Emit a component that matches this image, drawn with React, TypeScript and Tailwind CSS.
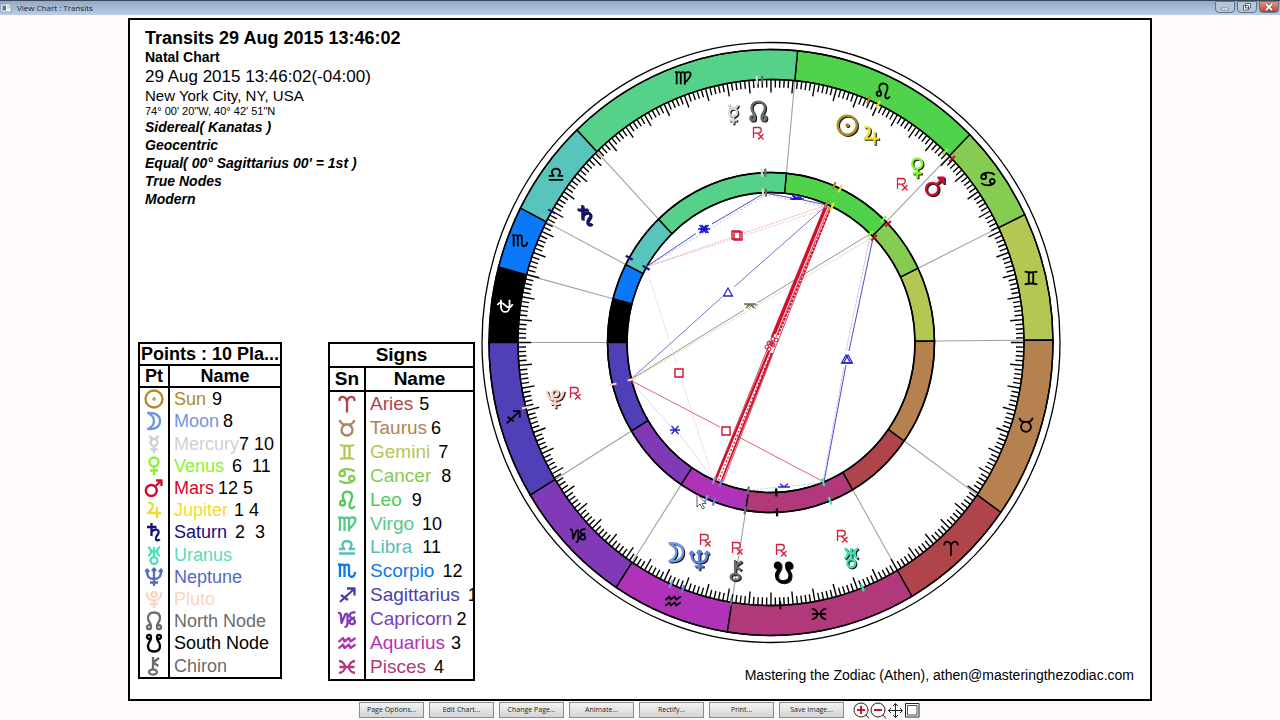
import React from "react";

type GlyphName =
  | "sun" | "moon" | "mercury" | "venus" | "mars" | "jupiter" | "saturn" | "uranus" | "neptune" | "pluto"
  | "north" | "south" | "chiron"
  | "aries" | "taurus" | "gemini" | "cancer" | "leo" | "virgo" | "libra" | "scorpio" | "sagittarius"
  | "capricorn" | "aquarius" | "pisces" | "ophiuchus";

/* Stroke paths, each drawn in a 20 x 20 box. */
const GLYPHS: Record<GlyphName, string> = {
  sun: "M1.5 10a8.5 8.5 0 1 0 17 0a8.5 8.5 0 1 0 -17 0M9.4 10a.6 .6 0 1 0 1.2 0a.6 .6 0 1 0 -1.2 0",
  moon: "M4 2C12 1 16 5 16 10S12 19 4 18C8 16 10 14 10 10S8 4 4 2Z",
  mercury: "M6.5 8.5a3.5 3.5 0 1 0 7 0a3.5 3.5 0 1 0 -7 0M6 1.5C6.500 6 13.500 6 14 1.500M10 12V19M6.500 15.500H13.500",
  venus: "M5.500 6a4.500 4.500 0 1 0 9 0a4.500 4.500 0 1 0 -9 0M10 10.500V19M6 14.500H14",
  mars: "M1.800 12.500a5.500 5.500 0 1 0 11 0a5.500 5.500 0 1 0 -11 0M11 8.500L17.500 2.500M12 2.500H17.500V8",
  jupiter: "M4 3C10 1.500 10.500 8 4 13H17M13 7V18.500",
  saturn: "M7.500 1V14M3 5H12.500M7.500 10C10 6.500 15.500 7 14.500 11C13.500 14 11 14.500 12 17.500C13 19 15 18.500 15.500 17",
  uranus: "M6.500 15.500a3.500 3.500 0 1 0 7 0a3.500 3.500 0 1 0 -7 0M10 2V12M4 2C8 4 8 9 4 11M16 2C12 4 12 9 16 11M6.500 6.500H13.500",
  neptune: "M3 3C3 10 5 12 10 12S17 10 17 3M10 2V19M6 15.500H14M1.500 5L3 2.500L5 5M8 4L10 1.500L12 4M15 5L17 2.500L18.500 5",
  pluto: "M7.300 5.500a2.700 2.700 0 1 0 5.400 0a2.700 2.700 0 1 0 -5.400 0M2.500 3.500C3 9 5.500 11.500 10 11.500S17 9 17.500 3.500M10 11.500V19M6 15H14",
  north: "M7 15C7 12 4 11 4 7C4 3.500 6.500 1.500 10 1.500S16 3.500 16 7C16 11 13 12 13 15M3 16.200a2 2 0 1 0 4 0a2 2 0 1 0 -4 0M13 16.200a2 2 0 1 0 4 0a2 2 0 1 0 -4 0",
  south: "M7 5C7 8 4 9 4 13C4 16.500 6.500 18.500 10 18.500S16 16.500 16 13C16 9 13 8 13 5M3 3.800a2 2 0 1 0 4 0a2 2 0 1 0 -4 0M13 3.800a2 2 0 1 0 4 0a2 2 0 1 0 -4 0",
  chiron: "M5 16a4 2.700 0 1 0 8 0a4 2.700 0 1 0 -8 0M9 1V13M15 2L9 6.500L14.500 10",
  aries: "M2.500 7C2 1.500 9 1 10 8V18.500M17.500 7C18 1.500 11 1 10 8",
  taurus: "M4.500 12a5.500 5.500 0 1 0 11 0a5.500 5.500 0 1 0 -11 0M2.500 2C4.500 7 7 6.500 10 6.500S15.500 7 17.500 2",
  gemini: "M3 3C7 4 13 4 17 3M3 17C7 16 13 16 17 17M7.500 4V16M12.500 4V16",
  cancer: "M2.500 7.500a2.700 2.700 0 1 0 5.400 0a2.700 2.700 0 1 0 -5.400 0M2.500 7C4 2 14 2 17.500 5.500M12.100 12.500a2.700 2.700 0 1 0 5.400 0a2.700 2.700 0 1 0 -5.400 0M17.500 13C16 18 6 18 2.500 14.500",
  leo: "M3 13a2.500 2.500 0 1 0 5 0a2.500 2.500 0 1 0 -5 0M7.500 11.500C6 8 5 6.500 6 4.500C8 0 15.500 1 15 7C14.500 11 11 15 13 17.500C14.500 19 17 18 17.500 16",
  virgo: "M1 3.500H3V17M3 5C4 3 7.500 3 7.500 5.500V17M7.500 5C8.500 3 12 3 12 5.500V17.500M12 4.500C14 3 18.500 3 18.500 5.500C18.500 9 15 12.500 12 15",
  libra: "M2 16.500H18M2 12H7.500C3.500 8 6 4 10 4S16.500 8 12.500 12H18",
  scorpio: "M1 3.500H3V16M3 5C4 3 7.500 3 7.500 5.500V16M7.500 5C8.500 3 12 3 12 5.500V13C12 17 18 17 18 11",
  sagittarius: "M3 17L17 4M10 3.500H17.500V10.500M4 10L11 15",
  capricorn: "M1 4C4 3 4 6 4.500 14L8 6C8.500 4 11 4 10.500 8V14C10.500 16 9.500 18 7.500 18M18.500 3.500C14 3 12 5 13 7.500C14 9.500 18 9.500 18 12.500C18 16 12.500 16 12.500 13C12.500 10 16 9.500 18 8",
  aquarius: "M1.500 9L6 5L7.500 8.500L12 5L13.500 8.500L18.500 5M1.500 15.500L6 11.500L7.500 15L12 11.500L13.500 15L18.500 11.500",
  pisces: "M2 4C10 5 10 15 2 16M18 4C10 5 10 15 18 16M2.500 10H17.500",
  ophiuchus: "M5.500 3V11C5.500 18.500 15 18.500 15 11V3M1.500 9C4 4.500 7 6 10 9S16 13 18.500 8",
};

const Strokes = ({ name, color, width = 2 }: { name: GlyphName; color: string; width?: number }) => (
  <path d={GLYPHS[name]} fill="none" stroke={color} strokeWidth={width} strokeLinejoin="round" />
);

interface Row {
  glyph: GlyphName;
  name: string;
  color: string;
  note?: string;
  gap?: string;
}

const POINTS: Row[] = [
  { glyph: "sun", name: "Sun", color: "#b08a24", note: "9", gap: "pl-1.5" },
  { glyph: "moon", name: "Moon", color: "#6f96df", note: "8", gap: "pl-1" },
  { glyph: "mercury", name: "Mercury", color: "#d0d0d4", note: "7 10" },
  { glyph: "venus", name: "Venus", color: "#84f52e", note: "6  11", gap: "pl-2" },
  { glyph: "mars", name: "Mars", color: "#cf0a2c", note: "12 5", gap: "pl-1" },
  { glyph: "jupiter", name: "Jupiter", color: "#f0dc30", note: "1 4", gap: "pl-1.5" },
  { glyph: "saturn", name: "Saturn", color: "#14107a", note: "2  3", gap: "pl-2" },
  { glyph: "uranus", name: "Uranus", color: "#56dcc0" },
  { glyph: "neptune", name: "Neptune", color: "#5468c4" },
  { glyph: "pluto", name: "Pluto", color: "#fbd3bf" },
  { glyph: "north", name: "North Node", color: "#6c6c6c" },
  { glyph: "south", name: "South Node", color: "#000000" },
  { glyph: "chiron", name: "Chiron", color: "#6c6c6c" },
];

const SIGNS: Row[] = [
  { glyph: "aries", name: "Aries", color: "#b0444b", note: "5", gap: "pl-1.5" },
  { glyph: "taurus", name: "Taurus", color: "#b08458", note: "6", gap: "pl-1" },
  { glyph: "gemini", name: "Gemini", color: "#b5c652", note: "7", gap: "pl-2" },
  { glyph: "cancer", name: "Cancer", color: "#86cc52", note: "8", gap: "pl-2.5" },
  { glyph: "leo", name: "Leo", color: "#50cb58", note: "9", gap: "pl-2.5" },
  { glyph: "virgo", name: "Virgo", color: "#55c98a", note: "10", gap: "pl-2" },
  { glyph: "libra", name: "Libra", color: "#58c0b8", note: "11", gap: "pl-2.5" },
  { glyph: "scorpio", name: "Scorpio", color: "#0a78f0", note: "12", gap: "pl-2" },
  { glyph: "sagittarius", name: "Sagittarius", color: "#4a40ac", note: "1", gap: "pl-2" },
  { glyph: "capricorn", name: "Capricorn", color: "#7a3cb8", note: "2", gap: "pl-1" },
  { glyph: "aquarius", name: "Aquarius", color: "#b034b4", note: "3", gap: "pl-1.5" },
  { glyph: "pisces", name: "Pisces", color: "#b0387b", note: "4", gap: "pl-2" },
];

interface LegendProps {
  title: string;
  short: string;
  rows: Row[];
  tableClass: string;
  headClass: string;
  iconCol: string;
}

const Legend = ({ title, short, rows, tableClass, headClass, iconCol }: LegendProps) => (
  <table className={`table-fixed border-collapse border-2 border-black ${tableClass}`}>
    <colgroup>
      <col className={iconCol} />
      <col />
    </colgroup>
    <thead>
      <tr>
        <th colSpan={2} className={`overflow-hidden whitespace-nowrap border-2 border-black p-0 ${headClass}`}>{title}</th>
      </tr>
      <tr>
        <th className={`border-2 border-black p-0 ${headClass}`}>{short}</th>
        <th className={`border-2 border-black p-0 ${headClass}`}>Name</th>
      </tr>
    </thead>
    <tbody>
      {rows.map((r) => (
        <tr key={r.name}>
          <td className="border-r-2 border-black p-0">
            <svg viewBox="0 0 20 20" className="mx-auto block h-5 w-5" aria-hidden="true">
              <Strokes name={r.glyph} color={r.color} width={2.3} />
            </svg>
          </td>
          <td className="overflow-hidden whitespace-pre p-0 pl-1 leading-5">
            <span style={{ color: r.color }}>{r.name}</span>
            {r.note && <span className={`text-lg/5 ${r.gap ?? ""}`}>{r.note}</span>}
          </td>
        </tr>
      ))}
    </tbody>
  </table>
);

/* Wheel geometry: the wheel is slightly taller than it is wide. */
const CX = 771;
const CY = 341.5;
type Ring = [number, number];
const RIM: Ring = [289, 300];
const BAND_OUT: Ring = [282, 293];
const BAND_IN: Ring = [253, 263];
const HUB_OUT: Ring = [163.5, 170];
const HUB_IN: Ring = [144, 150];

const at = ([rx, ry]: Ring, deg: number, inset = 0): [number, number] => {
  const a = (deg * Math.PI) / 180;
  return [CX + (rx - inset) * Math.cos(a), CY - (ry - inset) * Math.sin(a)];
};

const sector = (o: Ring, i: Ring, from: number, to: number) => {
  const [ax, ay] = at(o, from);
  const [bx, by] = at(o, to);
  const [cx, cy] = at(i, to);
  const [dx, dy] = at(i, from);
  return `M${ax} ${ay}A${o[0]} ${o[1]} 0 0 0 ${bx} ${by}L${cx} ${cy}A${i[0]} ${i[1]} 0 0 1 ${dx} ${dy}Z`;
};

const SECTORS: { glyph: GlyphName; from: number; to: number; fill: string; x: number; y: number; ink?: string }[] = [
  { glyph: "gemini", from: 0.5, to: 25.9, fill: "#b5c652", x: 1031, y: 277 },
  { glyph: "cancer", from: 25.9, to: 45.2, fill: "#86cc52", x: 988, y: 178 },
  { glyph: "leo", from: 45.2, to: 84.6, fill: "#50d34b", x: 883, y: 90 },
  { glyph: "virgo", from: 84.6, to: 133.5, fill: "#55d18a", x: 683, y: 77 },
  { glyph: "libra", from: 133.5, to: 152.7, fill: "#58c4bc", x: 556, y: 173 },
  { glyph: "scorpio", from: 152.7, to: 165.1, fill: "#0a78f8", x: 520, y: 240 },
  { glyph: "ophiuchus", from: 165.1, to: 180, fill: "#000000", x: 505, y: 305, ink: "#ffffff" },
  { glyph: "sagittarius", from: 180, to: 211.4, fill: "#5040b8", x: 513, y: 416 },
  { glyph: "capricorn", from: 211.4, to: 236.7, fill: "#803ab8", x: 578, y: 534 },
  { glyph: "aquarius", from: 236.7, to: 261.1, fill: "#b032b8", x: 673, y: 600 },
  { glyph: "pisces", from: 261.1, to: 300, fill: "#b0387b", x: 819, y: 613 },
  { glyph: "aries", from: 300, to: 324.6, fill: "#b0444b", x: 951, y: 547 },
  { glyph: "taurus", from: 324.6, to: 360.5, fill: "#b5814f", x: 1026, y: 424 },
];

const PLANETS: { glyph: GlyphName; deg: number; color: string; x: number; y: number; weight?: number }[] = [
  { glyph: "mercury", deg: 93.2, color: "#d8d8d8", x: 733, y: 113 },
  { glyph: "north", deg: 92, color: "#6c6c6c", x: 758, y: 110 },
  { glyph: "sun", deg: 67.3, color: "#b08a24", x: 847, y: 124 },
  { glyph: "jupiter", deg: 64.9, color: "#f4e020", x: 871, y: 134 },
  { glyph: "venus", deg: 46.5, color: "#84f52e", x: 917, y: 167 },
  { glyph: "mars", deg: 44.3, color: "#cf0a2c", x: 935, y: 185 },
  { glyph: "saturn", deg: 150.1, color: "#14107a", x: 585, y: 214 },
  { glyph: "pluto", deg: 194.3, color: "#fbd3bf", x: 555, y: 397 },
  { glyph: "moon", deg: 246.7, color: "#6f9ce8", x: 676, y: 551 },
  { glyph: "neptune", deg: 249.6, color: "#5f84dc", x: 699, y: 559 },
  { glyph: "chiron", deg: 260.9, color: "#6c6c6c", x: 736, y: 569 },
  { glyph: "south", deg: 272.1, color: "#000000", x: 783, y: 571, weight: 2.8 },
  { glyph: "uranus", deg: 291.2, color: "#42e0b4", x: 851, y: 556 },
];

const RETROGRADE: [number, number][] = [
  [758, 132], [902, 183], [575, 392], [705, 539], [737, 547], [781, 549], [842, 535],
];

const BLUE = "#3a34cc";
const RED = "#d0102c";

const ASPECTS: { d: string; color: string; w: number; dash?: string }[] = [
  { d: "M646 266L696 232.500M712 223L763 193", color: BLUE, w: 0.9 },
  { d: "M648 265L764 195", color: "#8a86e6", w: 0.6, dash: "2 2" },
  { d: "M765 192L792 197M803 199L827 204", color: BLUE, w: 0.9 },
  { d: "M765 193L790 199M805 202L829 206", color: "#8a86e6", w: 0.6, dash: "2 2" },
  { d: "M646 266L730 237M744 232L827 204", color: "#e88a96", w: 0.7, dash: "2 1" },
  { d: "M646 266L730 239M745 234L831 206", color: "#e8a0a8", w: 0.6, dash: "2 1" },
  { d: "M630 379L722 296M734 286L827 204", color: BLUE, w: 0.7 },
  { d: "M630 379L744 309M757 302L870 233", color: "#6a6a50", w: 0.7 },
  { d: "M630 380L746 311M757 305L873 236", color: "#dca8a0", w: 0.6, dash: "2 1" },
  { d: "M873 237L849 350M846 364L824 481", color: BLUE, w: 0.9 },
  { d: "M870 236L846 350M844 366L823 481", color: "#9a96e6", w: 0.6, dash: "3 1" },
  { d: "M630 379L720 426M733 433L824 481", color: "#d04050", w: 0.8 },
  { d: "M646 266L677 364M682 381L714 480", color: "#f0a8b0", w: 0.7, dash: "1 1" },
  { d: "M630 379L670 425M680 434L714 479", color: "#b4b2e4", w: 0.7, dash: "2 1" },
  { d: "M748 490L777 486M792 485L823 482", color: "#a4a4d4", w: 0.6, dash: "2 1" },
  { d: "M826 204L772 336M769 350L715 480", color: RED, w: 2.4 },
  { d: "M827 205L775 333M772 352L721 481", color: RED, w: 1.8 },
  { d: "M831 206L778 334", color: RED, w: 1.8, dash: "3 1" },
  { d: "M829 206L776 336M767 349L714 480", color: RED, w: 0.8 },
  { d: "M831 206L774 350L723 481", color: RED, w: 0.8 },
  { d: "M771 352L718 481", color: RED, w: 1.2, dash: "2 2" },
];

const star = (x: number, y: number, r = 5) =>
  `M${x - r} ${y}H${x + r}M${x - r * 0.7} ${y - r * 0.8}L${x + r * 0.7} ${y + r * 0.8}M${x + r * 0.7} ${y - r * 0.8}L${x - r * 0.7} ${y + r * 0.8}`;
const halfStar = (x: number, y: number, s: number) =>
  `M${x - 6} ${y}H${x + 6}M${x} ${y}L${x - 4} ${y + 4 * s}M${x} ${y}L${x + 4} ${y + 4 * s}`;
const square = (x: number, y: number, r = 4) => `M${x - r} ${y - r}h${2 * r}v${2 * r}h${-2 * r}Z`;
const triangle = (x: number, y: number) => `M${x} ${y - 4}L${x + 4.5} ${y + 4}H${x - 4.5}Z`;

const MARKS: { d: string; color: string; w: number }[] = [
  { d: star(703, 228), color: "#1010e0", w: 1.5 },
  { d: star(705, 228), color: "#1010e0", w: 1.5 },
  { d: star(675, 429), color: "#2a24d0", w: 1.4 },
  { d: halfStar(796, 198, -1), color: "#1010e0", w: 1.5 },
  { d: halfStar(798, 198, -0.7), color: "#1010e0", w: 1.5 },
  { d: halfStar(784, 486, -0.8), color: "#2a24d0", w: 1.4 },
  { d: halfStar(750, 303, 1), color: "#6c6c48", w: 1.4 },
  { d: halfStar(752, 304, 1), color: "#6c6c48", w: 0.8 },
  { d: square(736, 234), color: RED, w: 1.4 },
  { d: square(738, 235), color: RED, w: 1.4 },
  { d: square(679, 372), color: RED, w: 1.4 },
  { d: square(726, 430), color: RED, w: 1.4 },
  { d: triangle(728, 291), color: "#2a24d0", w: 1.3 },
  { d: triangle(846, 358), color: "#2a24d0", w: 1.3 },
  { d: triangle(848, 358), color: "#2a24d0", w: 1.3 },
];

const OPPOSITIONS: [number, number][] = [[769, 344], [771, 340], [774, 341], [771, 346]];

const ticks = Array.from({ length: 360 }, (_, d) => {
  const [x1, y1] = at(BAND_IN, d);
  const [x2, y2] = at(BAND_IN, d, d % 5 === 0 ? 13 : 8);
  return `M${x1.toFixed(1)} ${y1.toFixed(1)}L${x2.toFixed(1)} ${y2.toFixed(1)}`;
}).join("");

const radial = (a: [number, number], b: [number, number]) => `M${a[0]} ${a[1]}L${b[0]} ${b[1]}`;

const Ellipse = ({ r, w }: { r: Ring; w: number }) => (
  <ellipse cx={CX} cy={CY} rx={r[0]} ry={r[1]} fill="none" stroke="#000" strokeWidth={w} />
);

const Wheel = () => (
  <svg viewBox="480 39 582 605" className="block h-auto w-full" role="img" aria-label="Transit chart wheel">
    {SECTORS.map((s) => (
      <g key={s.glyph}>
        <path d={sector(BAND_OUT, BAND_IN, s.from, s.to)} fill={s.fill} stroke="#000" strokeWidth="1.4" />
        <path d={radial(at(BAND_IN, s.from), at(HUB_OUT, s.from))} stroke="#a0a0a0" strokeWidth="1.1" />
        <path d={sector(HUB_OUT, HUB_IN, s.from, s.to)} fill={s.fill} stroke="#000" strokeWidth="1.4" />
      </g>
    ))}
    <path d={ticks} stroke="#000" strokeWidth="1.4" />
    <Ellipse r={RIM} w={1.3} />
    <Ellipse r={BAND_OUT} w={1.4} />
    <Ellipse r={BAND_IN} w={1.4} />
    <Ellipse r={HUB_OUT} w={1.6} />
    <Ellipse r={HUB_IN} w={1.6} />
    {SECTORS.map((s) => (
      <g key={s.glyph} transform={`translate(${s.x - 9} ${s.y - 9}) scale(0.9)`}>
        <Strokes name={s.glyph} color={s.ink ?? "#000"} width={2} />
      </g>
    ))}
    {ASPECTS.map((a) => (
      <path key={a.d} d={a.d} fill="none" stroke={a.color} strokeWidth={a.w} strokeDasharray={a.dash} />
    ))}
    {MARKS.map((m) => (
      <path key={m.d} d={m.d} fill="none" stroke={m.color} strokeWidth={m.w} />
    ))}
    {OPPOSITIONS.map(([x, y]) => (
      <g key={`${x}-${y}`} fill="none" stroke={RED} strokeWidth="1">
        <circle cx={x - 2} cy={y + 2} r="2" />
        <circle cx={x + 2} cy={y - 2} r="2" />
      </g>
    ))}
    {PLANETS.map((p) => (
      <g key={p.glyph}>
        <path
          d={[BAND_IN, HUB_OUT, HUB_IN].map((r) => radial(at(r, p.deg, -4), at(r, p.deg, 4))).join("")}
          stroke={p.color}
          strokeWidth="2.2"
        />
        <g transform={`translate(${p.x - 11} ${p.y - 11}) scale(1.12)`}>
          <g transform="translate(1 0.900)">
            <Strokes name={p.glyph} color="#1c1c1c" width={p.weight ?? 2.1} />
          </g>
          <Strokes name={p.glyph} color={p.color} width={p.weight ?? 2.1} />
        </g>
      </g>
    ))}
    {RETROGRADE.map(([x, y]) => (
      <path
        key={`${x}-${y}`}
        d={`M${x - 4.5} ${y + 5}V${y - 5.5}H${x + 0.5}a2.800 2.800 0 0 1 0 5.600H${x - 4.5}M${x - 0.5} ${y}L${x + 5.5} ${y + 6.5}M${x + 5.5} ${y + 1}L${x} ${y + 6.5}`}
        fill="none"
        stroke="#d4203c"
        strokeWidth="1.3"
      />
    ))}
    <path d="M697 493V506L700 503L702.500 508L704.500 507L702 502.500H706Z" fill="#fff" stroke="#333" strokeWidth="0.8" />
  </svg>
);

const BUTTONS = ["Page Options...", "Edit Chart...", "Change Page...", "Animate...", "Rectify...", "Print...", "Save Image..."];

const Tool = ({ label, children }: { label: string; children: React.ReactNode }) => (
  <button type="button" aria-label={label} className="block">
    <svg viewBox="0 0 17 17" className="block h-[17px] w-[17px]" fill="none" stroke="#222">{children}</svg>
  </button>
);

const captionButton = "flex h-3 w-5 items-center justify-center rounded-b-sm border border-[#60748e]";

export default function App() {
  return (
    <div className="flex min-h-screen flex-col bg-[#fffafa] font-['Liberation_Sans',Arial,sans-serif] text-black">
      <header className="flex h-[15px] items-center border-t border-[#3c4858] bg-linear-to-b from-[#93a9c8] to-[#bacde2]">
        <svg viewBox="0 0 12 10" className="h-[10px] w-3" aria-hidden="true">
          <path d="M1 1H11V9H1Z" fill="#f6f8f8" stroke="#8492a0" strokeWidth="0.700" />
          <path d="M2.500 2.500H6V7.500H2.500Z" fill="#5c7a80" />
          <path d="M8 3V6M9.500 2V5" stroke="#8aa" strokeWidth="0.800" />
        </svg>
        <h1 className="pl-[5px] font-['Open_Sans',sans-serif] text-[8px] leading-3 text-[#1c2430]">View Chart : Transits</h1>
        <div className="ml-auto flex gap-0.5 self-start pr-px">
          <button type="button" aria-label="Minimize" className={`${captionButton} bg-[#b4c6da]`}>
            <svg viewBox="0 0 12 8" className="h-2 w-3"><path d="M2.500 5H9.500V7H2.500Z" fill="#fff" stroke="#56657a" strokeWidth="0.600" /></svg>
          </button>
          <button type="button" aria-label="Restore" className={`${captionButton} bg-[#b4c6da]`}>
            <svg viewBox="0 0 12 8" className="h-2 w-3" fill="#fff" stroke="#56657a"><path d="M4.500 .5H9.500V5H4.500ZM2.500 2.500H7.500V7H2.500Z" /><path d="M4.500 4.500H5.500" /></svg>
          </button>
          <button type="button" aria-label="Close" className={`${captionButton} bg-linear-to-b from-[#d89888] to-[#c03c30]`}>
            <svg viewBox="0 0 12 8" className="h-2 w-3"><path d="M3 1L9 7M9 1L3 7" stroke="#553" strokeWidth="3" /><path d="M3 1L9 7M9 1L3 7" stroke="#fff" strokeWidth="1.800" /></svg>
          </button>
        </div>
      </header>

      <div className="flex flex-1 flex-col px-[10%] pt-[3px]">
        <main className="flex flex-1 border-2 border-black bg-white">
          <section className="flex w-[350px] shrink-0 flex-col pb-[18px] pl-2 pt-2">
            <div className="whitespace-nowrap pl-[7px]">
              <h2 className="text-lg/5 font-bold">Transits 29 Aug 2015 13:46:02</h2>
              <p className="text-sm/[19px] font-bold">Natal Chart</p>
              <p className="text-[17px]/5">29 Aug 2015 13:46:02(-04:00)</p>
              <p className="text-[15px]/[17px]">New York City, NY, USA</p>
              <p className="text-[11px]/[14px]">74° 00' 20"W, 40° 42' 51"N</p>
              <div className="text-sm/[18px] font-bold italic">
                <p>Sidereal( Kanatas )</p>
                <p>Geocentric</p>
                <p>Equal( 00° Sagittarius 00' = 1st )</p>
                <p>True Nodes</p>
                <p>Modern</p>
              </div>
            </div>
            <div className="mt-auto flex items-start gap-[46px]">
              <Legend title="Points : 10 Pla..." short="Pt" rows={POINTS} tableClass="h-[337px] w-[144px] text-lg/5" headClass="text-lg/5" iconCol="w-[30px]" />
              <Legend title="Signs" short="Sn" rows={SIGNS} tableClass="h-[339px] w-[147px] text-[19px]/5" headClass="text-[19px]/[22px]" iconCol="w-9" />
            </div>
          </section>
          <section className="flex min-w-0 flex-1 flex-col">
            <div className="pr-[88px] pt-5">
              <Wheel />
            </div>
            <p className="mt-auto pb-[15px] pr-4 text-right text-sm/[18px]">
              Mastering the Zodiac (Athen), athen@masteringthezodiac.com
            </p>
          </section>
        </main>
      </div>

      <footer className="flex h-[19px] items-start justify-center gap-[5px] pt-px">
        {BUTTONS.map((b) => (
          <button
            key={b}
            type="button"
            className="h-4 w-[65px] whitespace-nowrap border border-[#8c8c8c] bg-linear-to-b from-[#f4f4f4] to-[#d4d4d4] font-['Open_Sans',sans-serif] text-[7px]/3 text-[#222]"
          >
            {b}
          </button>
        ))}
        <div className="flex pl-1">
          <Tool label="Zoom in">
            <circle cx="8" cy="8" r="7" fill="#fff" />
            <path d="M13 13L16 16.500" />
            <path d="M8 4V12M4 8H12" stroke="#d0102c" strokeWidth="2" />
          </Tool>
          <Tool label="Zoom out">
            <circle cx="8" cy="8" r="7" fill="#fff" />
            <path d="M13 13L16 16.500" />
            <path d="M4 8H12" stroke="#d0102c" strokeWidth="2" />
          </Tool>
          <Tool label="Pan">
            <path d="M8.500 1.500V15.500M1.500 8.500H15.500M6 4L8.500 1.500L11 4M6 13L8.500 15.500L11 13M4 6L1.500 8.500L4 11M13 6L15.500 8.500L13 11" />
          </Tool>
          <Tool label="Fit page">
            <path d="M1.500 1.500H15V15H1.500Z" fill="#fff" />
            <path d="M3.500 3.500H13V13H3.500Z" strokeWidth="0.800" />
          </Tool>
        </div>
      </footer>
    </div>
  );
}
